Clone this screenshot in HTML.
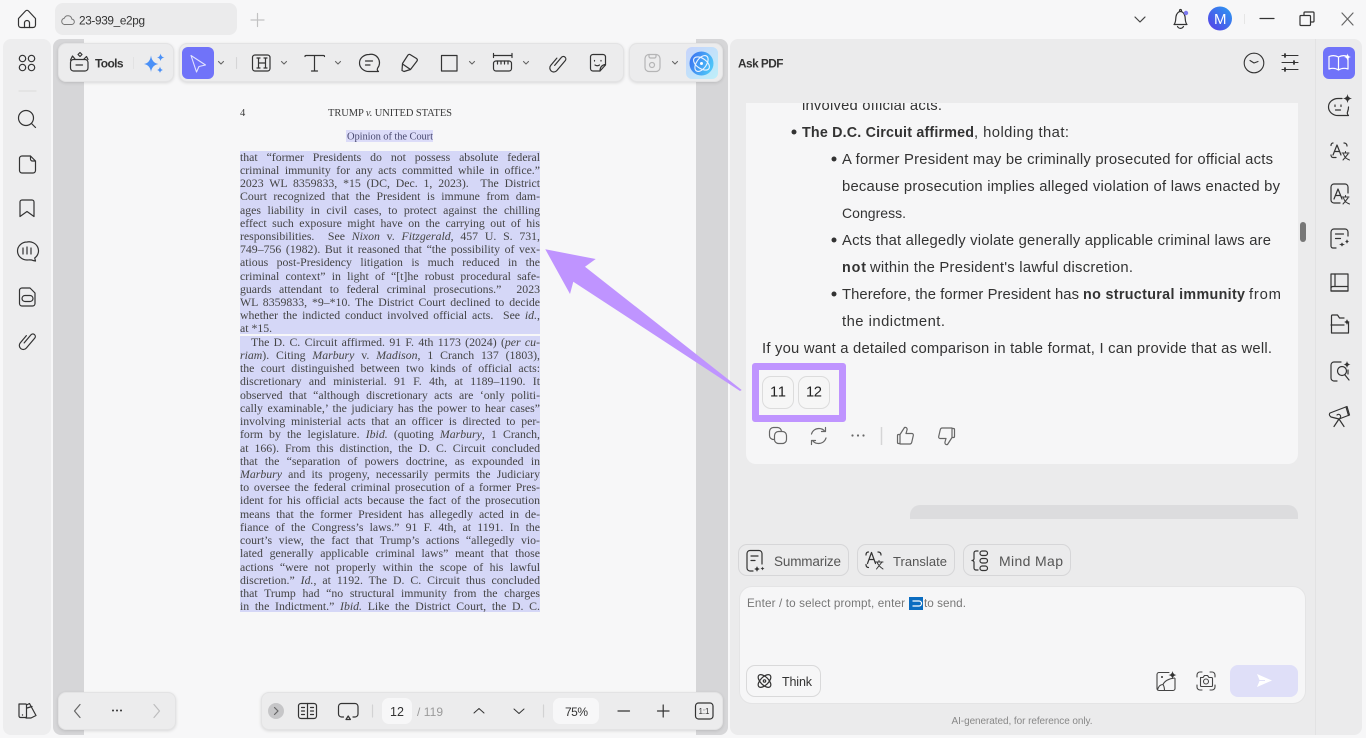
<!DOCTYPE html>
<html lang="en">
<head>
<meta charset="utf-8">
<title>23-939_e2pg</title>
<style>
html,body{margin:0;padding:0;width:1366px;height:738px;overflow:hidden;background:#f7f7f8}
body{position:relative;font-family:"Liberation Sans",sans-serif}
.a{position:absolute;box-sizing:border-box}
.bar{background:#ececed;border:1px solid #e3e3e4;border-radius:8px;box-shadow:0 1px 3px rgba(0,0,0,.13)}
.l{position:absolute;left:240px;width:300px;height:13px;margin-top:.5px;font:11.8px/13px "Liberation Serif",serif;color:#444;white-space:nowrap;text-align:justify;text-align-last:justify}
svg.o{position:absolute;left:0;top:0}
svg.o text{font-family:"Liberation Sans",sans-serif;stroke:none;fill:#333}
svg.o text.s{font-family:"Liberation Serif",serif;fill:#3a3a3a}
.i{fill:none;stroke:#333;stroke-width:1.2;stroke-linecap:round;stroke-linejoin:round}
.f{fill:#333;stroke:none}
</style>
</head>
<body>
<!-- tab -->
<div class="a" style="left:55px;top:3px;width:182px;height:32px;background:#ebebec;border-radius:8px"></div>
<!-- left sidebar -->
<div class="a" style="left:3px;top:39px;width:48px;height:696px;background:#ededee;border-radius:8px"></div>
<!-- doc gutter -->
<div class="a" style="left:53px;top:39px;width:675px;height:696px;background:#d6d6d8;border-radius:8px"></div>
<div class="a" style="left:84px;top:39px;width:612px;height:699px;background:#f7f7f8"></div>
<!-- right panel -->
<div class="a" style="left:730px;top:39px;width:632px;height:696px;background:#ebebec;border-radius:8px"></div>
<div class="a" style="left:1315px;top:39px;width:1px;height:696px;background:#e2e2e3"></div>
<!-- toolbars -->
<div class="a bar" style="left:58px;top:43px;width:116px;height:39px"></div>
<div class="a bar" style="left:179px;top:43px;width:445px;height:39px"></div>
<div class="a bar" style="left:629px;top:43px;width:94px;height:39px"></div>
<div class="a bar" style="left:58px;top:692px;width:118px;height:38px"></div>
<div class="a bar" style="left:261px;top:692px;width:462px;height:38px"></div>
<div class="a" style="left:382px;top:698px;width:30px;height:26px;background:#f7f7f8;border-radius:7px"></div>
<div class="a" style="left:553px;top:698px;width:46px;height:26px;background:#f7f7f8;border-radius:7px"></div>
<div class="a" style="left:182px;top:47px;width:32px;height:32px;background:#7073f9;border-radius:6px"></div>
<div class="a" style="left:686px;top:47px;width:32px;height:32px;background:linear-gradient(135deg,#c7d3fb,#bdeffa);border-radius:6px"></div>
<div class="a" style="left:1323px;top:47px;width:32px;height:32px;background:#7073f9;border-radius:6px"></div>

<!-- pdf highlights -->
<div class="a" style="left:346px;top:130px;width:87px;height:12px;background:#dcdcf9"></div>
<div class="a" style="left:240px;top:151px;width:300px;height:183px;background:#d5d7f7"></div>
<div class="a" style="left:240px;top:336px;width:300px;height:276px;background:#d5d7f7"></div>

<!-- pdf text -->
<div class="l" style="top:150px">that “former Presidents do not possess absolute federal</div>
<div class="l" style="top:163px">criminal immunity for any acts committed while in office.”</div>
<div class="l" style="top:176px">2023 WL 8359833, *15 (DC, Dec. 1, 2023). &nbsp;The District</div>
<div class="l" style="top:189px">Court recognized that the President is immune from dam-</div>
<div class="l" style="top:203px">ages liability in civil cases, to protect against the chilling</div>
<div class="l" style="top:216px">effect such exposure might have on the carrying out of his</div>
<div class="l" style="top:229px">responsibilities. &nbsp;See <i>Nixon</i> v. <i>Fitzgerald</i>, 457 U. S. 731,</div>
<div class="l" style="top:242px">749–756 (1982). But it reasoned that “the possibility of vex-</div>
<div class="l" style="top:255px">atious post-Presidency litigation is much reduced in the</div>
<div class="l" style="top:269px">criminal context” in light of “[t]he robust procedural safe-</div>
<div class="l" style="top:282px">guards attendant to federal criminal prosecutions.” &nbsp;2023</div>
<div class="l" style="top:295px">WL 8359833, *9–*10. The District Court declined to decide</div>
<div class="l" style="top:308px">whether the indicted conduct involved official acts. &nbsp;See <i>id.</i>,</div>
<div class="l" style="top:321px;text-align-last:left">at *15.</div>
<div class="l" style="top:335px;left:251px;width:289px">The D. C. Circuit affirmed. 91 F. 4th 1173 (2024) (<i>per cu-</i></div>
<div class="l" style="top:348px"><i>riam</i>). Citing <i>Marbury</i> v. <i>Madison</i>, 1 Cranch 137 (1803),</div>
<div class="l" style="top:361px">the court distinguished between two kinds of official acts:</div>
<div class="l" style="top:374px">discretionary and ministerial. 91 F. 4th, at 1189–1190. It</div>
<div class="l" style="top:388px">observed that “although discretionary acts are ‘only politi-</div>
<div class="l" style="top:401px">cally examinable,’ the judiciary has the power to hear cases”</div>
<div class="l" style="top:414px">involving ministerial acts that an officer is directed to per-</div>
<div class="l" style="top:427px">form by the legislature. <i>Ibid.</i> (quoting <i>Marbury</i>, 1 Cranch,</div>
<div class="l" style="top:441px">at 166). From this distinction, the D. C. Circuit concluded</div>
<div class="l" style="top:454px">that the “separation of powers doctrine, as expounded in</div>
<div class="l" style="top:467px"><i>Marbury</i> and its progeny, necessarily permits the Judiciary</div>
<div class="l" style="top:480px">to oversee the federal criminal prosecution of a former Pres-</div>
<div class="l" style="top:493px">ident for his official acts because the fact of the prosecution</div>
<div class="l" style="top:507px">means that the former President has allegedly acted in de-</div>
<div class="l" style="top:520px">fiance of the Congress’s laws.” 91 F. 4th, at 1191. In the</div>
<div class="l" style="top:533px">court’s view, the fact that Trump’s actions “allegedly vio-</div>
<div class="l" style="top:546px">lated generally applicable criminal laws” meant that those</div>
<div class="l" style="top:560px">actions “were not properly within the scope of his lawful</div>
<div class="l" style="top:573px">discretion.” <i>Id.</i>, at 1192. The D. C. Circuit thus concluded</div>
<div class="l" style="top:586px">that Trump had “no structural immunity from the charges</div>
<div class="l" style="top:599px">in the Indictment.” <i>Ibid.</i> Like the District Court, the D. C.</div>

<!-- chat card -->
<div class="a" style="left:746px;top:103px;width:552px;height:361px;background:#f6f6f7;border-radius:0 0 10px 10px;overflow:hidden">
  <svg width="552" height="30" style="position:absolute;left:0;top:-10px"><text x="56" y="17" font-size="14.800" fill="#333" textLength="140" font-family="Liberation Sans">involved official acts.</text></svg>
</div>
<div class="a" style="left:1300px;top:222px;width:6px;height:20px;background:#777;border-radius:3px"></div>
<div class="a" style="left:910px;top:505px;width:388px;height:14px;background:#dcdcde;border-radius:10px 10px 0 0"></div>

<!-- prompt buttons -->
<div class="a" style="left:738px;top:544px;width:111px;height:32px;border:1px solid #d6d6d8;border-radius:9px"></div>
<div class="a" style="left:857px;top:544px;width:98px;height:32px;border:1px solid #d6d6d8;border-radius:9px"></div>
<div class="a" style="left:963px;top:544px;width:108px;height:32px;border:1px solid #d6d6d8;border-radius:9px"></div>
<!-- input -->
<div class="a" style="left:739px;top:586px;width:567px;height:118px;background:#f6f6f7;border:1px solid #e4e4e5;border-radius:13px"></div>
<div class="a" style="left:746px;top:665px;width:75px;height:32px;border:1px solid #d9d9da;border-radius:9px"></div>
<div class="a" style="left:1230px;top:665px;width:68px;height:32px;background:#dfdff8;border-radius:8px"></div>
<div class="a" style="left:909px;top:597px;width:14px;height:13px;background:#0a6cc0"></div>
<!-- annotation buttons -->
<div class="a" style="left:752px;top:363px;width:94px;height:59px;border:7px solid #bf94ff;border-radius:3px"></div>
<div class="a" style="left:762px;top:375.500px;width:32px;height:33px;border:1px solid #dcdcdc;border-radius:9px;background:#f6f6f6"></div>
<div class="a" style="left:798px;top:375.500px;width:32px;height:33px;border:1px solid #dcdcdc;border-radius:9px;background:#f6f6f6"></div>

<svg class="o" width="1366" height="738" viewBox="0 0 1366 738">
<defs>
<linearGradient id="av" x1="0" y1="1" x2="1" y2="0"><stop offset="0" stop-color="#5a3ce6"/><stop offset="1" stop-color="#2a9cf2"/></linearGradient>
<linearGradient id="ai" x1="0" y1="0" x2="1" y2="0.4"><stop offset="0" stop-color="#3a6cf0"/><stop offset="1" stop-color="#4cc3f8"/></linearGradient>
</defs>

<!-- top bar -->
<g class="i">
<path d="M18.500 18.500L25.500 11a2 2 0 0 1 3 0L35.500 18.500V25a2.500 2.500 0 0 1-2.500 2.500H21a2.500 2.500 0 0 1-2.500-2.500Z"/>
<path d="M24.500 27.500V23a2.500 2.500 0 0 1 5 0v4.500"/>
<path d="M65.500 24.500h6a2.700 2.700 0 0 0 .3-5.400a3.900 3.900 0 0 0-7.500-.9a3.200 3.200 0 0 0 1.200 6.300Z" style="stroke:#777;stroke-width:1"/>
<path d="M251 20h13M257.500 13.500v13" style="stroke:#c2c2c3"/>
<path d="M1135 17l5 5 5-5" style="stroke:#444"/>
<path d="M1174 24.500c2-2 1.500-5 2-8c.5-3 2.500-5 4.500-5s4 2 4.500 5c.5 3 0 6 2 8ZM1179.500 11c0-2 2-2 2 0M1177.500 26.500c1.500 2.500 4.500 2.500 6 0"/>
<path d="M1260 18.500h14" />
<path d="M1304 15.500v-2.500a1 1 0 0 1 1-1h8a1 1 0 0 1 1 1v8a1 1 0 0 1-1 1h-2.500M1301 15.500h8.500a1 1 0 0 1 1 1v8a1 1 0 0 1-1 1H1301a1 1 0 0 1-1-1v-8a1 1 0 0 1 1-1Z"/>
<path d="M1342 13l11 12M1353 13l-11 12" style="stroke:#666"/>
</g>
<line x1="1244.500" y1="14" x2="1244.500" y2="24" stroke="#e6e6e6"/>
<circle cx="1186" cy="13" r="2.200" fill="#7d79f0"/>
<circle cx="1220" cy="18.500" r="12" fill="url(#av)"/>
<text x="1214" y="24" font-size="15" textLength="12" style="fill:#fff">M</text>
<text x="79" y="24.500" font-size="11.800" textLength="66" fill="#333">23-939_e2pg</text>

<!-- left sidebar icons -->
<g class="i">
<circle cx="22.500" cy="58.500" r="3.200"/><circle cx="31.500" cy="58.500" r="3.200"/><circle cx="22.500" cy="67.500" r="3.200"/><circle cx="31.500" cy="67.500" r="3.200"/>
<path d="M19 91h17" style="stroke:#dedede"/>
<circle cx="26" cy="118" r="7.500"/><path d="M31.500 123.500l4 4"/>
<path d="M22 156h8.500l5 5v9.500a2.500 2.500 0 0 1-2.500 2.500H22a2.500 2.500 0 0 1-2.500-2.500v-12a2.500 2.500 0 0 1 2.500-2.500ZM30.500 156v3a2 2 0 0 0 2 2h3"/>
<path d="M22 200h10a2 2 0 0 1 2 2v14.500l-7-5-7 5V202a2 2 0 0 1 2-2Z"/>
<path d="M27 242a9.500 9 0 1 0 0 18c2 0 4.500-.5 6 .5l2.500.5l-.8-3A9.500 9 0 0 0 27 242Z"/>
<path d="M23 248v6M27 247v7M31 248v6"/>
<path d="M22 288h8l5 5v10.500a2.500 2.500 0 0 1-2.500 2.500H22a2.500 2.500 0 0 1-2.500-2.500V290.500a2.500 2.500 0 0 1 2.500-2.500Z"/>
<rect x="22" y="295.500" width="11" height="6" rx="3"/>
<path transform="translate(27.500 340.500) rotate(40)" d="M-1 4V-6.500a2.500 2.500 0 0 1 5 0V6.500a4 4 0 0 1-8 0V-3"/>
<path d="M19.500 704h6a1 1 0 0 1 1 1v11.500a1 1 0 0 1-1 1h-5a1.500 1.500 0 0 1-1.500-1.500V704ZM26.500 705l3-1.500 6.500 12-5 2.500h-5M27 708l5-1.500"/>
</g>
<circle cx="22.500" cy="715" r=".7" class="f"/>

<!-- tools -->
<g class="i">
<rect x="70.500" y="59.500" width="17.500" height="11.500" rx="3"/>
<path d="M76 65h6.500" />
<path d="M70.500 60l2-4 2.500 3M84 59l2.500-2.500 1.500 3"/>
<path d="M80 52.500l2 2-2 2-2-2Z"/>
</g>
<text x="95" y="67.500" font-size="12" font-weight="700" textLength="28.500">Tools</text>
<line x1="133.500" y1="57" x2="133.500" y2="69" stroke="#e2e2e3"/>
<path d="M151 55.500Q152 63 158.500 64Q152 65 151 72Q150 65 144 64Q150 63 151 55.500Z" fill="#4a90f7"/>
<path d="M160.500 53.500Q161 57 164.500 57.500Q161 58 160.500 61Q160 58 157 57.500Q160 57 160.500 53.500Z" fill="#4a90f7"/>
<path d="M160 66.500Q160.500 69.500 163 70Q160.500 70.500 160 73Q159.500 70.500 157 70Q159.500 69.500 160 66.500Z" fill="#4a90f7"/>

<!-- main toolbar -->
<path d="M191 55.500L205.500 65L199 66.500L196.500 72Z" fill="none" stroke="#fff" stroke-opacity=".8" stroke-width="1.100" stroke-linejoin="round"/>
<g class="i" style="stroke-width:1.100">
<path d="M218.500 61.500l2.500 2.500 2.500-2.500M281.500 61.500l2.500 2.500 2.500-2.500M335.500 61.500l2.500 2.500 2.500-2.500M469.500 61.500l2.500 2.500 2.500-2.500M523.500 61.500l2.500 2.500 2.500-2.500M672.500 61.500l2.500 2.500 2.500-2.500" style="stroke:#666"/>
<path d="M236.500 57.500v11" style="stroke:#d5d5d6"/>
</g>
<g class="i">
<rect x="252.500" y="55" width="17.500" height="16" rx="2.500"/>
<path d="M257 58h3M264 58h3M258.500 58v10M265.500 58v10M257 68h3M264 68h3M258.500 63h7"/>
<path d="M305 56.500c0-.5 0-1 1-1h17.500c1 0 1 .5 1 1M314.500 55.500V71M311.500 71h6"/>
<path d="M369 54.500a9.500 8.500 0 1 0 0 17h9.500c-1.500-1-1.500-2.200-.8-3.500A8.500 8.500 0 0 0 369 54.500Z"/>
<path d="M365.500 61h7M365.500 65h4.500"/>
<path d="M410 54.500L416.500 58.500Q418 59.500 417 61L410.500 69.500L404 71.500L402 70.500L402.500 63.500L408 55Q409 54 410 54.500ZM402.500 64L410.500 69.500"/>
<rect x="441.500" y="55.500" width="15.500" height="15.500"/>
<path d="M493.500 53.500v4M512 53.500v4M493.500 55.500h18.500"/>
<rect x="493.500" y="61" width="18" height="10" rx="2.500"/>
<path d="M497.500 61v3M501 61v3M504.500 61v3M508 61v3"/>
<path transform="translate(558 63) rotate(40)" d="M-1 4V-6.500a2.500 2.500 0 0 1 5 0V6.500a4 4 0 0 1-8 0V-3"/>
<path d="M593 54.500h10a2.500 2.500 0 0 1 2.500 2.500v8l-5.500 6h-7a2.500 2.500 0 0 1-2.500-2.500V57a2.500 2.500 0 0 1 2.500-2.500Z"/>
<path d="M600 71c0-4 2-6 5.500-6.500M594.500 60.500v.5M601 60.500v.5M595 65c1.500 1 3 1 4.500 0"/>
<rect x="645" y="54.500" width="15" height="17" rx="4" style="stroke:#b5b5b6"/>
<circle cx="652" cy="65" r="2.500" style="stroke:#b5b5b6"/>
<path d="M649 54.500v2a1.500 1.500 0 0 0 1.500 1.500h4a1.500 1.500 0 0 0 1.500-1.500v-2" style="stroke:#b5b5b6"/>
</g>
<circle cx="701.500" cy="63.500" r="12" fill="url(#ai)"/>
<g fill="none" stroke="#eaf2ff" stroke-width="1.100">
<ellipse cx="701.500" cy="63.500" rx="9" ry="5" transform="rotate(35 701.500 63.500)"/>
<ellipse cx="701.500" cy="63.500" rx="9" ry="5" transform="rotate(-55 701.500 63.500)"/>
</g>
<circle cx="701.500" cy="63.500" r="1.500" fill="#fff"/>

<!-- bottom left -->
<g class="i">
<path d="M80 704.500l-5.500 6.500 5.500 6.500" style="stroke:#666"/>
<path d="M154 704.500l5.500 6.500-5.500 6.500" style="stroke:#bdbdbe"/>
</g>
<circle cx="113" cy="710.500" r="1" class="f"/><circle cx="117" cy="710.500" r="1" class="f"/><circle cx="121" cy="710.500" r="1" class="f"/>

<!-- bottom main -->
<circle cx="276" cy="711" r="8" fill="#c6c6c8"/>
<g class="i">
<path d="M274.500 707.500l3.500 3.500-3.500 3.500" style="stroke:#666"/>
<rect x="298.500" y="703.500" width="18" height="15" rx="2.500"/>
<path d="M307.500 703.500v15M301.500 707.500h3M301.500 711h3M301.500 714.500h3M310.500 707.500h3M310.500 711h3M310.500 714.500h3"/>
<path d="M343.500 717h-2a3 3 0 0 1-3-3v-7.500a3 3 0 0 1 3-3h13.500a3 3 0 0 1 3 3v7.500a3 3 0 0 1-3 3h-2"/>
<path d="M346 719.500l2.200-3.500 2.200 3.500Z"/>
<path d="M372.500 705v12" style="stroke:#d2d2d3"/>
<path d="M474 713l5-4.500 5 4.500M514 709l5 4.500 5-4.500" style="stroke-width:1"/>
<path d="M543.500 705v12" style="stroke:#d2d2d3"/>
<path d="M618 711h11.500M657.500 711h11.500M663.200 705v12"/>
<rect x="695.500" y="703" width="17.500" height="16" rx="3"/>
</g>
<text x="397" y="716" font-size="12.500" text-anchor="middle" fill="#333">12</text>
<text x="417" y="716" font-size="12" textLength="26" style="fill:#9a9a9a">/ 119</text>
<text x="565" y="716" font-size="12" textLength="23">75%</text>
<text x="698.500" y="714" font-size="8" textLength="11">1:1</text>

<!-- ask pdf header -->
<text x="738" y="67.500" font-size="11.800" font-weight="700" textLength="45.500">Ask PDF</text>
<g class="i" style="stroke-width:1.100">
<circle cx="1254" cy="63" r="9.800"/>
<path d="M1250 60.500l4 2.500 4-1.500"/>
<path d="M1282 55.500h16M1282 62.500h16M1282 69.500h16"/>
<path d="M1285 54v3M1294 61v3M1285 68v3" style="stroke-width:1.800"/>
</g>

<!-- right rail -->
<path d="M1329 56.500c3-1.200 6.500-1.200 9.500.5c3-1.700 6.500-1.700 9.500-.5v12.500c-3-1-6.500-1-9.500 1c-3-2-6.500-2-9.500-1ZM1338.500 57v13" fill="none" stroke="#fff" stroke-width="1.200" stroke-linejoin="round"/>
<path d="M1347.500 53.500Q1348 56.500 1351 57Q1348 57.500 1347.500 60.500Q1347 57.500 1344 57Q1347 56.500 1347.500 53.500Z" fill="#fff"/>
<g class="i">
<path d="M1342 98.500h-4a9.500 8.500 0 0 0 0 17h10.500c-1-1-1.500-2-1-3.500c.5-1.500 1-2.500 1-5"/>
<path d="M1335 105v1.500M1341 105v1.500M1335.500 110h5"/>
<path d="M1331 145.500c0-1.500 1-2.500 2-2.500M1331 155c0 1.500 1 2.500 2 2.500h3M1344 143c1.500 0 3 1 3 3"/>
<path d="M1333 155l4-10 4 10M1334.500 151.500h5"/>
<path d="M1342 153h7M1345.500 151.500v1.500M1343 160l5-6M1343.500 154c1 3 3 5 6 6" style="stroke-width:1"/>
<path d="M1345 184h-11a3 3 0 0 0-3 3v13a3 3 0 0 0 3 3h6M1345 184a3 3 0 0 1 3 3v6"/>
<path d="M1334 199l4-10 4 10M1335.500 195.500h5"/>
<path d="M1342 197h7M1345.500 195.500v1.500M1343 204l5-6M1343.500 198c1 3 3 5 6 6" style="stroke-width:1"/>
<path d="M1341 229h4a3 3 0 0 1 3 3v4M1341 229h-7a3 3 0 0 0-3 3v14a2 2 0 0 0 2 2h3M1335.500 234h8M1335.500 238.500h5"/>
<rect x="1331" y="274" width="17" height="17"/>
<path d="M1331 288c0-1 1-1.500 2-1.500h15M1335 274v12.500M1331 291h17"/>
<path d="M1344 318h-4.500l-2-3h-5a1 1 0 0 0-1 1v17h17v-10"/>
<path d="M1331 325h13"/>
<path d="M1341 362h-7a3 3 0 0 0-3 3v13a3 3 0 0 0 3 3h3M1348 370v4"/>
<circle cx="1342" cy="371" r="4.500"/><path d="M1345 375l4 5"/>
<path d="M1331 417c-2-1.500-2-3-1-4l17-6.500 2.500 8.500-10.500 4Z"/>
<path d="M1346 407l2.500 8.500M1339 419l-5 7.500M1339 419l5 7.500M1337 415a2 2 0 0 1 3 3"/>
</g>
<path d="M1347.500 94Q1348 98 1352 98.500Q1348 99 1347.500 103Q1347 99 1343 98.500Q1347 98 1347.500 94Z" class="f"/>
<path d="M1342 231Q1342 233 1345 233.500 1342 234 1342 236 1342 234 1339 233.500 1342 233 1342 231Z" transform="translate(0 11) scale(1)" class="f"/>
<path d="M1347 239Q1347.300 241 1349 241.500Q1347.300 242 1347 244Q1346.700 242 1345 241.500Q1346.700 241 1347 239Z" class="f"/>
<path d="M1347 319Q1347.500 321.500 1350 322Q1347.500 322.500 1347 325Q1346.500 322.500 1344 322Q1346.500 321.500 1347 319Z" class="f"/>
<path d="M1347 361Q1347.500 364 1350.500 364.500Q1347.500 365 1347 368Q1346.500 365 1343.500 364.500Q1346.500 364 1347 361Z" class="f"/>

<!-- chat text -->
<g font-size="14.800">
<circle cx="794" cy="132" r="2.500" class="f"/>
<text x="802" y="137" font-size="14.300" font-weight="700" textLength="172">The D.C. Circuit affirmed</text>
<text x="974" y="137" textLength="95">, holding that:</text>
<circle cx="834" cy="159" r="2.500" class="f"/>
<text x="842" y="164" textLength="431">A former President may be criminally prosecuted for official acts</text>
<text x="842" y="191" textLength="438">because prosecution implies alleged violation of laws enacted by</text>
<text x="842" y="218" font-size="14" textLength="64">Congress.</text>
<circle cx="834" cy="240" r="2.500" class="f"/>
<text x="842" y="245" textLength="429">Acts that allegedly violate generally applicable criminal laws are</text>
<text x="842" y="272" font-size="14.300" font-weight="700" textLength="24">not</text>
<text x="870" y="272" textLength="263">within the President's lawful discretion.</text>
<circle cx="834" cy="294" r="2.500" class="f"/>
<text x="842" y="299" textLength="237">Therefore, the former President has</text>
<text x="1083" y="299" font-size="14.300" font-weight="700" textLength="162">no structural immunity</text>
<text x="1249" y="299" textLength="32">from</text>
<text x="842" y="326" textLength="103">the indictment.</text>
<text x="762" y="353" textLength="510">If you want a detailed comparison in table format, I can provide that as well.</text>
<text x="770" y="396.500" textLength="16" style="fill:#222">11</text>
<text x="806" y="396.500" textLength="16" style="fill:#222">12</text>
</g>

<!-- arrow -->
<path d="M545.300 249.300L595.700 259L585 266.700L741.700 390L740 391L573.300 281.700L570 294Z" fill="#bf94ff"/>

<!-- chat actions -->
<g class="i" style="stroke:#666">
<rect x="769.500" y="427.500" width="12" height="12" rx="4"/>
<rect x="774.500" y="431.500" width="12" height="12" rx="4" style="fill:#f6f6f7"/>
<path d="M811.500 434c1-3.500 4-5.500 7.500-5.500c2.500 0 4.500 1 6 3M826 438c-1 3.500-4 5.500-7.500 5.500c-2.500 0-4.500-1-6-3M825.500 427.500v4h-4M811.500 444.500v-4h4"/>
<path transform="translate(1 0)" d="M899 434.500v9h-1.500a1 1 0 0 1-1-1v-7a1 1 0 0 1 1-1Zm0 0l4.500-7c2-.5 3 1 2.500 2.500l-1 3.500h6c1 0 1.500 1 1.300 2l-1.500 6.500c-.2 1-1 2-2 2H899"/>
<path transform="rotate(180 925.500 436)" d="M899 434.500v9h-1.500a1 1 0 0 1-1-1v-7a1 1 0 0 1 1-1Zm0 0l4.500-7c2-.5 3 1 2.500 2.500l-1 3.500h6c1 0 1.500 1 1.300 2l-1.500 6.500c-.2 1-1 2-2 2H899"/>
</g>
<circle cx="852.500" cy="435.500" r="1.100" fill="#666"/><circle cx="858" cy="435.500" r="1.100" fill="#666"/><circle cx="863.500" cy="435.500" r="1.100" fill="#666"/>
<line x1="881.500" y1="427" x2="881.500" y2="445" stroke="#d5d5d6" stroke-width="1.500"/>

<!-- prompt buttons content -->
<g class="i">
<path d="M762 564v-10.500a3 3 0 0 0-3-3h-9a3 3 0 0 0-3 3v14.500a3 3 0 0 0 3 3h3M751 556h7M751 560.500h4"/>
<path d="M866 555c0-2 1-3 2.500-3M866 564.500c0 2 1 3 2.500 3M878 552c2 0 3 1 3 3"/>
<path d="M867.500 563.500l4-11 4 11M869 559.500h5"/>
<path d="M875.500 562h7.500M879 560.500v1.500M876.500 569l5.500-7M877 562c1 3 3 5 6 7" style="stroke-width:1"/>
<path d="M978 551h-2a2 2 0 0 0-2 2v5a2 2 0 0 1-2 2.500a2 2 0 0 1 2 2.500v5a2 2 0 0 0 2 2h2"/>
<rect x="980" y="551" width="7.500" height="4.500" rx="2.200"/><rect x="980" y="558.500" width="7.500" height="4.500" rx="2.200"/><rect x="980" y="566" width="7.500" height="4.500" rx="2.200"/>
<ellipse cx="764.500" cy="681" rx="8" ry="4" transform="rotate(45 764.500 681)"/>
<ellipse cx="764.500" cy="681" rx="8" ry="4" transform="rotate(-45 764.500 681)"/>
<circle cx="764.500" cy="681" r="1.200"/>
</g>
<path d="M757 566Q757.500 568.500 760 569Q757.500 569.500 757 572Q756.500 569.500 754 569Q756.500 568.500 757 566Z" class="f"/>
<path d="M762.500 566.500Q762.700 568 764.500 568.500Q762.700 569 762.500 570.500Q762.300 569 760.500 568.500Q762.300 568 762.500 566.500Z" class="f"/>
<text x="774" y="566" font-size="13.500" textLength="67" style="fill:#555">Summarize</text>
<text x="893" y="566" font-size="13" textLength="54" style="fill:#555">Translate</text>
<text x="999" y="566" font-size="14" textLength="64" style="fill:#555">Mind Map</text>

<!-- input text -->
<text x="747" y="607" font-size="11.700" textLength="158" style="fill:#777">Enter / to select prompt, enter</text>
<path d="M912.500 601h6.500a2.500 2.500 0 0 1 0 5h-6.500" fill="none" stroke="#fff" stroke-width="1.200"/>
<text x="924" y="607" font-size="11.700" textLength="42" style="fill:#777">to send.</text>
<text x="782" y="686" font-size="12.500" textLength="30" style="fill:#333">Think</text>
<g class="i" style="stroke:#444;stroke-width:1.100">
<path d="M1169 672.500h-10a2 2 0 0 0-2 2v14a2 2 0 0 0 2 2h14a2 2 0 0 0 2-2v-10"/>
<path d="M1157.500 690c1-4 3-5.500 5.500-5.500c1.500-3.500 6-6 11.500-6.500M1163 684.500c1 1.500 1.500 4 1.500 6"/>
<path d="M1197 677v-2a3 3 0 0 1 3-3h2M1210 672h2a3 3 0 0 1 3 3v2M1215 685v2a3 3 0 0 1-3 3h-2M1202 690h-2a3 3 0 0 1-3-3v-2"/>
<path d="M1200.500 677.500h2.500l1.500-2h3l1.500 2h2.500a1 1 0 0 1 1 1v7a1 1 0 0 1-1 1h-10a1 1 0 0 1-1-1v-7a1 1 0 0 1 1-1Z"/>
<circle cx="1206" cy="681.500" r="2.500"/>
</g>
<circle cx="1162" cy="677" r="1" class="f"/>
<path d="M1172.500 671Q1173 674.500 1176.500 675Q1173 675.500 1172.500 679Q1172 675.500 1168.500 675Q1172 674.500 1172.500 671Z" class="f"/>
<path d="M1257 674L1272 680.500L1257 687L1259.500 681H1265V680H1259.500Z" fill="#fff"/>
<text x="951.500" y="724" font-size="10" textLength="141" style="fill:#888">AI-generated, for reference only.</text>

<!-- pdf header -->
<text class="s" x="240" y="116" font-size="10.500">4</text>
<text class="s" x="328" y="116" font-size="10.500" textLength="124">TRUMP <tspan font-style="italic">v.</tspan> UNITED STATES</text>
<text class="s" x="347" y="139.500" font-size="10.500" textLength="86" style="fill:#4a4a70">Opinion of the Court</text>
</svg>
</body>
</html>
